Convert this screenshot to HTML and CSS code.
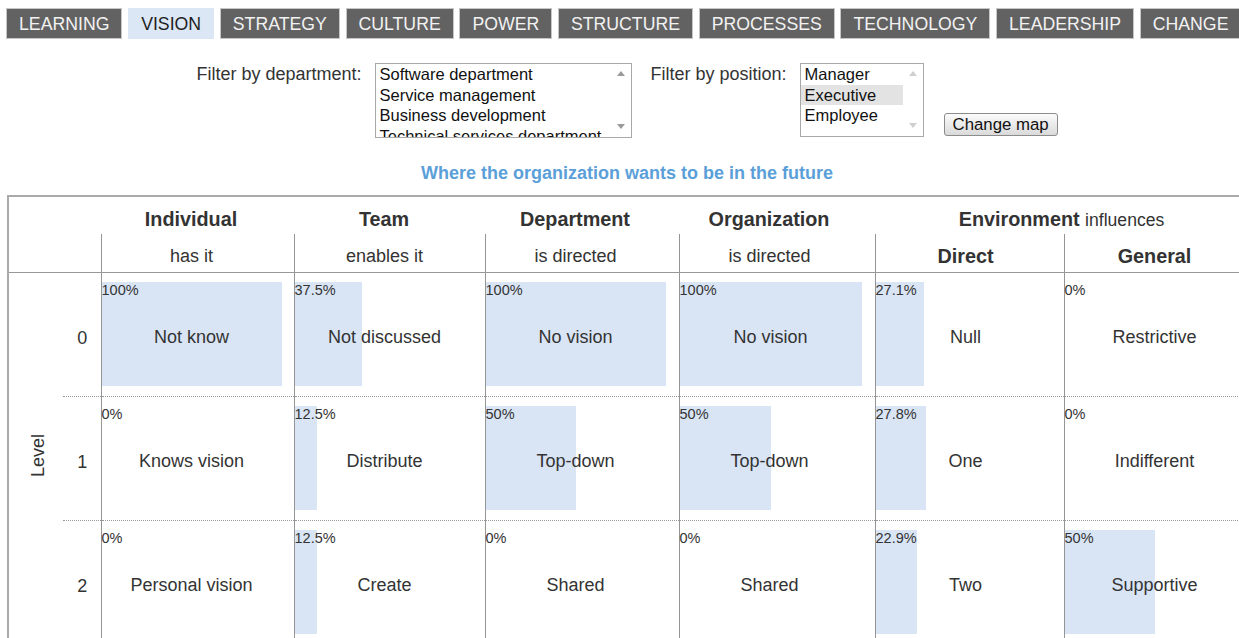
FILE: index.html
```html
<!DOCTYPE html>
<html>
<head>
<meta charset="utf-8">
<title>Vision map</title>
<link rel="stylesheet" href="styles.css">
</head>
<body>
	<div class="tabs">
		<a class="tab" href="#">LEARNING</a>
		<a class="tab active" href="#">VISION</a>
		<a class="tab" href="#">STRATEGY</a>
		<a class="tab" href="#">CULTURE</a>
		<a class="tab" href="#">POWER</a>
		<a class="tab" href="#">STRUCTURE</a>
		<a class="tab" href="#">PROCESSES</a>
		<a class="tab" href="#">TECHNOLOGY</a>
		<a class="tab" href="#">LEADERSHIP</a>
		<a class="tab" href="#">CHANGE</a>
	</div>

	<div class="page">
		<div class="filters">
			<span class="filter-label dept-label">Filter by department:</span>
			<div class="listbox dept">
				<div class="options">
					<div class="opt">Software department</div>
					<div class="opt">Service management</div>
					<div class="opt">Business development</div>
					<div class="opt">Technical services department</div>
				</div>
				<div class="scrollbar"><span class="arrow up"></span><span class="arrow down"></span></div>
			</div>
			<span class="filter-label pos-label">Filter by position:</span>
			<div class="listbox pos">
				<div class="options">
					<div class="opt">Manager</div>
					<div class="opt selected">Executive</div>
					<div class="opt">Employee</div>
				</div>
				<div class="scrollbar"><span class="arrow up"></span><span class="arrow down"></span></div>
			</div>
			<button class="btn">Change map</button>
		</div>

		<h2 class="title">Where the organization wants to be in the future</h2>

		<table class="map">
			<colgroup>
				<col class="c-level"><col class="c-num">
				<col class="c-ind"><col class="c-team"><col class="c-dept">
				<col class="c-org"><col class="c-dir"><col class="c-gen">
			</colgroup>
			<tr class="head1">
				<th colspan="2"></th>
				<th><div class="hd">Individual</div></th>
				<th><div class="hd">Team</div></th>
				<th><div class="hd">Department</div></th>
				<th><div class="hd">Organization</div></th>
				<th colspan="2">Environment <span class="light">influences</span></th>
			</tr>
			<tr class="head2">
				<th colspan="2" class="blank"></th>
				<th><div class="hd">has it</div></th>
				<th><div class="hd">enables it</div></th>
				<th><div class="hd">is directed</div></th>
				<th><div class="hd">is directed</div></th>
				<th class="strong"><div class="hd">Direct</div></th>
				<th class="strong"><div class="hd">General</div></th>
			</tr>
			<tr class="row first">
				<td rowspan="3" class="level"><span>Level</span></td>
				<td class="num">0</td>
				<td class="cell"><div class="box"><div class="bar" style="width:180px"></div><span class="pct">100%</span><span class="label">Not know</span></div></td>
				<td class="cell"><div class="box"><div class="bar" style="width:67.5px"></div><span class="pct">37.5%</span><span class="label">Not discussed</span></div></td>
				<td class="cell"><div class="box"><div class="bar" style="width:180px"></div><span class="pct">100%</span><span class="label">No vision</span></div></td>
				<td class="cell"><div class="box"><div class="bar" style="width:182px"></div><span class="pct">100%</span><span class="label">No vision</span></div></td>
				<td class="cell"><div class="box"><div class="bar" style="width:48.8px"></div><span class="pct">27.1%</span><span class="label">Null</span></div></td>
				<td class="cell"><div class="box"><div class="bar" style="width:0px"></div><span class="pct">0%</span><span class="label">Restrictive</span></div></td>
			</tr>
			<tr class="row">
				<td class="num">1</td>
				<td class="cell"><div class="box"><div class="bar" style="width:0px"></div><span class="pct">0%</span><span class="label">Knows vision</span></div></td>
				<td class="cell"><div class="box"><div class="bar" style="width:22.5px"></div><span class="pct">12.5%</span><span class="label">Distribute</span></div></td>
				<td class="cell"><div class="box"><div class="bar" style="width:90px"></div><span class="pct">50%</span><span class="label">Top-down</span></div></td>
				<td class="cell"><div class="box"><div class="bar" style="width:91px"></div><span class="pct">50%</span><span class="label">Top-down</span></div></td>
				<td class="cell"><div class="box"><div class="bar" style="width:50px"></div><span class="pct">27.8%</span><span class="label">One</span></div></td>
				<td class="cell"><div class="box"><div class="bar" style="width:0px"></div><span class="pct">0%</span><span class="label">Indifferent</span></div></td>
			</tr>
			<tr class="row">
				<td class="num">2</td>
				<td class="cell"><div class="box"><div class="bar" style="width:0px"></div><span class="pct">0%</span><span class="label">Personal vision</span></div></td>
				<td class="cell"><div class="box"><div class="bar" style="width:22.5px"></div><span class="pct">12.5%</span><span class="label">Create</span></div></td>
				<td class="cell"><div class="box"><div class="bar" style="width:0px"></div><span class="pct">0%</span><span class="label">Shared</span></div></td>
				<td class="cell"><div class="box"><div class="bar" style="width:0px"></div><span class="pct">0%</span><span class="label">Shared</span></div></td>
				<td class="cell"><div class="box"><div class="bar" style="width:41.2px"></div><span class="pct">22.9%</span><span class="label">Two</span></div></td>
				<td class="cell"><div class="box"><div class="bar" style="width:90px"></div><span class="pct">50%</span><span class="label">Supportive</span></div></td>
			</tr>
		</table>
	</div>
</body>
</html>
```

FILE: styles.css
```css
html, body {
	overflow: hidden;
}
body {
	margin: 0;
	background-color: #fff;
	font-family: "Liberation Sans", Arial, sans-serif;
	color: #333;
}

/* top tabs */
.tabs {
	display: flex;
	gap: 5.7px;
	margin: 8px 0 0 6px;
	white-space: nowrap;
}
.tab {
	display: block;
	height: 31px;
	box-sizing: border-box;
	padding: 2px 12px 0;
	border: 1px solid #c6c6c6;
	background-color: #626262;
	color: #f2f2f2;
	font-size: 17.7px;
	line-height: 27px;
	text-decoration: none;
}
.tab.active {
	background-color: #dce7f5;
	border-color: #dce7f5;
	color: #1e1e1e;
}

.page {
	width: 1240px;
	margin-left: 7px;
}

/* filters */
.filters {
	display: flex;
	justify-content: center;
	align-items: flex-start;
	margin-top: 24px;
	font-size: 18px;
}
.filter-label {
	line-height: 20.6px;
	margin-top: 1px;
}
.dept-label { margin-right: 13px; }
.pos-label { margin-right: 13px; }

.listbox {
	display: flex;
	box-sizing: border-box;
	height: 75px;
	border: 1px solid #a8a8a8;
	background-color: #fff;
	font-size: 16.5px;
	color: #111;
}
.listbox.dept {
	width: 257px;
	margin-right: 19px;
}
.listbox.pos {
	width: 124px;
	height: 74px;
	margin-right: 20px;
}
.options {
	flex: 1;
	overflow: hidden;
}
.opt {
	line-height: 20.6px;
	padding-left: 4px;
	white-space: nowrap;
}
.opt.selected {
	background-color: #e3e3e3;
}
.scrollbar {
	width: 20px;
	box-sizing: border-box;
	padding: 7px 0 8px;
	display: flex;
	flex-direction: column;
	justify-content: space-between;
	align-items: center;
}
.arrow {
	width: 0;
	height: 0;
	border-left: 4.5px solid transparent;
	border-right: 4.5px solid transparent;
}
.arrow.up { border-bottom: 5px solid #9a9a9a; }
.arrow.down { border-top: 5px solid #9a9a9a; }
.pos .arrow.up { border-bottom-color: #cfcfcf; }
.pos .arrow.down { border-top-color: #cfcfcf; }

.btn {
	margin-top: 50px;
	width: 114px;
	height: 23px;
	padding: 0;
	border: 1px solid #8c8c8c;
	border-radius: 3px;
	background: linear-gradient(#fbfbfb, #dadada);
	font-family: "Liberation Sans", Arial, sans-serif;
	font-size: 16.8px;
	color: #111;
}

.title {
	margin: 25px 0 12px;
	text-align: center;
	font-size: 18px;
	line-height: 20px;
	font-weight: bold;
	color: #5b9fd9;
}

/* the map */
.map {
	width: 1240px;
	table-layout: fixed;
	border-collapse: collapse;
	border-top: 2px solid #aaa;
	border-left: 2px solid #aaa;
}
.c-level { width: 55px; }
.c-num { width: 38px; }
.c-ind { width: 193px; }
.c-team { width: 191px; }
.c-dept { width: 194px; }
.c-org { width: 196px; }
.c-dir { width: 189px; }
.c-gen { width: 184px; }

.map th, .map td {
	padding: 0;
}
.hd {
	width: 180px;
	text-align: center;
}
.head1 th {
	height: 34px;
	font-size: 19.8px;
	font-weight: bold;
	vertical-align: bottom;
	padding-bottom: 3px;
}
.head1 .light {
	font-weight: normal;
	font-size: 17.6px;
}
.head2 th {
	height: 38px;
	font-size: 18px;
	font-weight: normal;
	border-left: 1px solid #959595;
	border-bottom: 1px solid #999;
	vertical-align: middle;
	padding-top: 7px;
	box-sizing: border-box;
}
.head2 th.blank {
	border-left: none;
}
.head2 th.strong {
	font-size: 19.8px;
	font-weight: bold;
}

.row td {
	border-top: 1px dotted #999;
}
.row.first td {
	border-top: 1px solid #999;
}
.map td.level {
	border-top: 1px solid #999;
	text-align: center;
	vertical-align: middle;
	padding-left: 5px;
	font-size: 18px;
}
.level span {
	display: inline-block;
	writing-mode: vertical-rl;
	transform: rotate(180deg);
}
.map td.num {
	text-align: center;
	font-size: 18px;
	padding: 8px 0 0 1px;
}
.cell {
	border-left: 1px solid #959595;
	padding: 9px 0 10px !important;
}
.box {
	display: grid;
	width: 180px;
	height: 104px;
}
.box > * {
	grid-area: 1 / 1;
}
.bar {
	justify-self: start;
	background-color: #d9e5f5;
}
.pct {
	justify-self: start;
	align-self: start;
	font-size: 14.5px;
	line-height: 15px;
	margin-top: 1px;
}
.label {
	place-self: center;
	font-size: 18px;
	margin-top: 7px;
	white-space: nowrap;
}
```
